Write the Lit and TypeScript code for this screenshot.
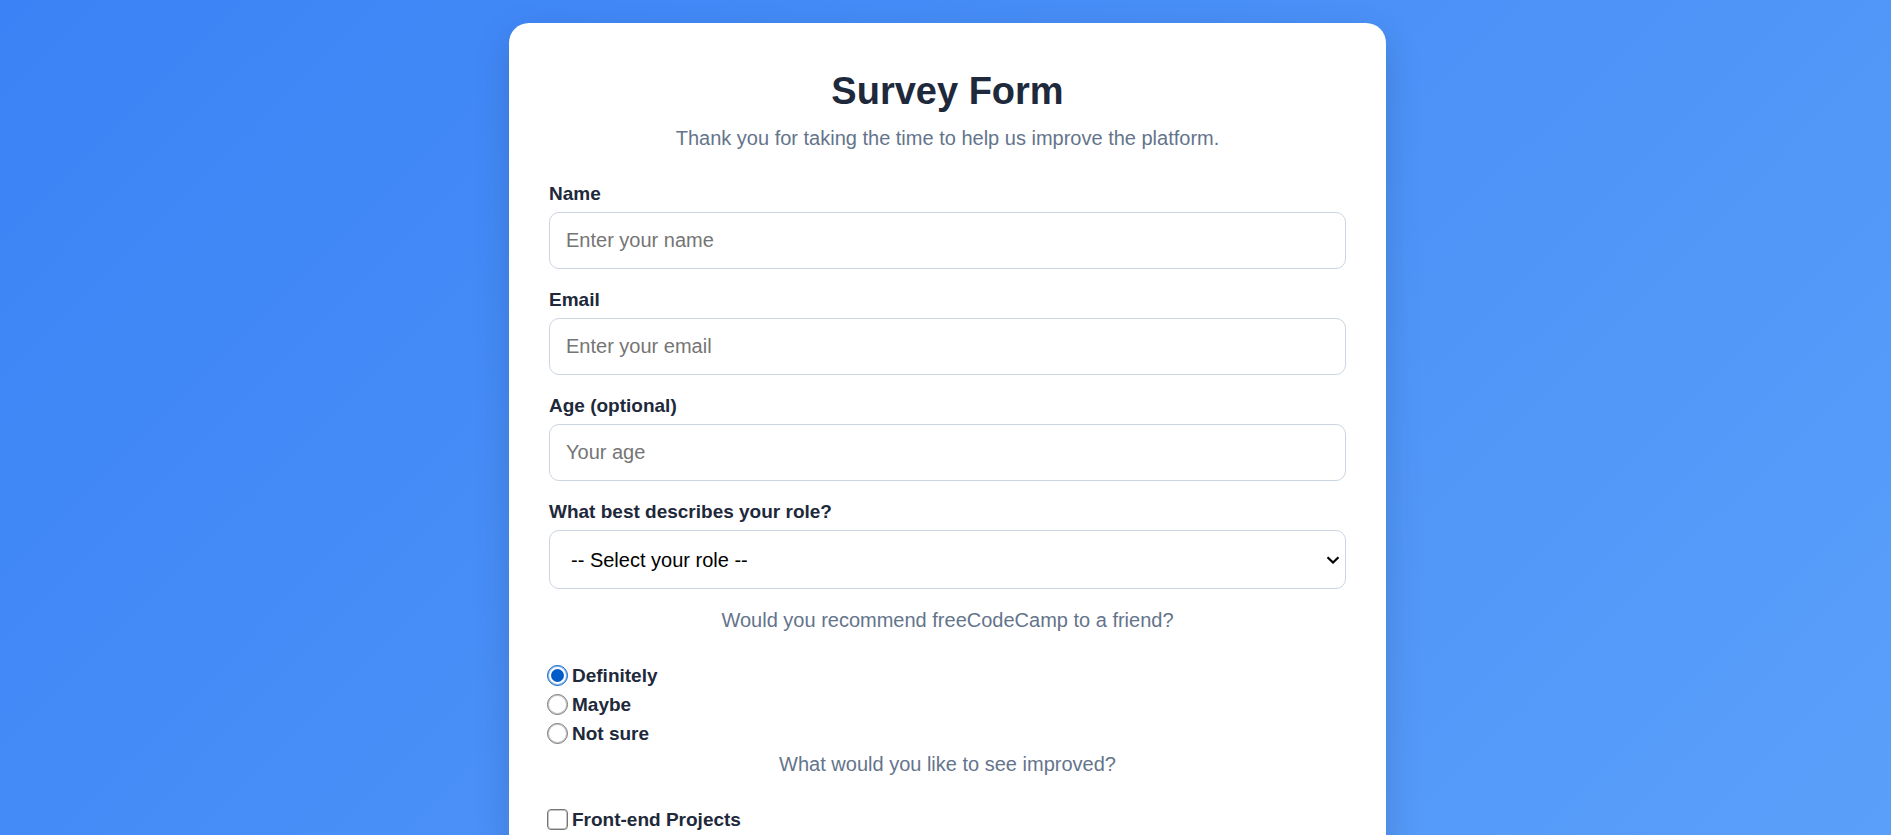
import { LitElement, html, css } from "lit";
import { customElement, state } from "lit/decorators.js";

@customElement("app-root")
export class AppRoot extends LitElement {
  static styles = css`
    :host {
      display: block;
      box-sizing: border-box;
      min-height: 100vh;
      padding: 23px 20px 0 24px;
      background: linear-gradient(135deg, #3b82f6, #60a5fa 117%);
      font-family: "Liberation Sans", Arial, sans-serif;
      font-size: 20px;
      line-height: 24px;
      color: #1e293b;
    }
    .card {
      box-sizing: border-box;
      max-width: 877px;
      margin: 0 auto;
      padding: 40px;
      background: #fff;
      border-radius: 20px;
      box-shadow: 0 12px 36px rgba(0, 0, 0, 0.15);
    }
    h1 {
      margin: 0 0 7px;
      font-size: 38px;
      line-height: 56px;
      text-align: center;
    }
    .lead {
      margin: 0 0 29px;
      color: #64748b;
      text-align: center;
    }
    form {
      padding-top: 3px;
    }
    .field {
      display: flex;
      flex-direction: column;
      gap: 6px;
      margin-bottom: 19px;
    }
    label {
      font-size: 19px;
      font-weight: 700;
    }
    .control {
      box-sizing: border-box;
      width: 100%;
      height: 57px;
      margin: 0;
      padding: 0 16px;
      border: 1px solid #cbd5e1;
      border-radius: 10px;
      background: #fff;
      color: #000;
      font: inherit;
    }
    .control::placeholder {
      color: #757575;
    }
    .select {
      display: grid;
      align-items: center;
    }
    .select > * {
      grid-area: 1 / 1;
    }
    select.control {
      height: 59px;
      padding: 0 21px;
      appearance: none;
    }
    .arrow {
      justify-self: end;
      width: 14px;
      height: 8px;
      margin-right: 6px;
      pointer-events: none;
    }
    .choices {
      margin: 0 0 4px;
    }
    .choice {
      display: flex;
      align-items: center;
      gap: 4px;
      height: 29px;
    }
    .choice input {
      box-sizing: border-box;
      display: grid;
      place-items: center;
      width: 21px;
      height: 21px;
      margin: 0 0 0 -2px;
      border: 1px solid #767676;
      border-radius: 4px;
      background: #fff;
      box-shadow: inset 0 0 0 1px #c4c4c4;
      appearance: none;
    }
    .choice input[type="radio"] {
      border-radius: 50%;
    }
    .choice input:checked {
      border-color: #005cc8;
      box-shadow: inset 0 0 0 1px #8cb6e6;
    }
    .choice input:checked::before {
      content: "";
      width: 13px;
      height: 13px;
      border-radius: inherit;
      background: #005cc8;
    }
  `;

  @state() private recommend = "Definitely";

  private field(id: string, label: string, type: string, placeholder: string) {
    return html`<div class="field">
      <label for=${id}>${label}</label>
      <input class="control" id=${id} type=${type} placeholder=${placeholder} />
    </div>`;
  }

  render() {
    return html`<main class="card">
      <h1>Survey Form</h1>
      <p class="lead">Thank you for taking the time to help us improve the platform.</p>
      <form>
        ${this.field("name", "Name", "text", "Enter your name")}
        ${this.field("email", "Email", "email", "Enter your email")}
        ${this.field("age", "Age (optional)", "number", "Your age")}
        <div class="field">
          <label for="role">What best describes your role?</label>
          <div class="select">
            <select class="control" id="role">
              <option>-- Select your role --</option>
            </select>
            <svg class="arrow" viewBox="0 0 14 8" aria-hidden="true">
              <path d="M1.500 1.200 7 6.500l5.500-5.300" fill="none" stroke="#000" stroke-width="2.200" />
            </svg>
          </div>
        </div>
        <p class="lead" id="recommend">Would you recommend freeCodeCamp to a friend?</p>
        <div class="choices" role="radiogroup" aria-labelledby="recommend">
          ${["Definitely", "Maybe", "Not sure"].map(
            (name, i) => html`<div class="choice">
              <input
                type="radio"
                name="recommend"
                id="recommend-${i}"
                .checked=${this.recommend === name}
                @change=${() => (this.recommend = name)}
              />
              <label for="recommend-${i}">${name}</label>
            </div>`
          )}
        </div>
        <p class="lead" id="improve">What would you like to see improved?</p>
        <div class="choices" role="group" aria-labelledby="improve">
          <div class="choice">
            <input type="checkbox" id="front-end" />
            <label for="front-end">Front-end Projects</label>
          </div>
        </div>
      </form>
    </main>`;
  }
}
